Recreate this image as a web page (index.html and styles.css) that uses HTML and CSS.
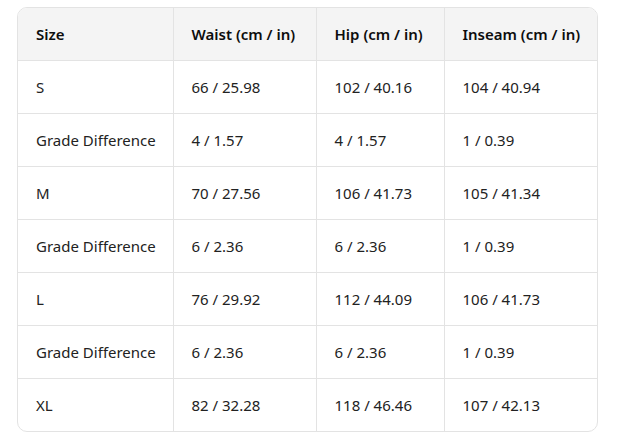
FILE: index.html
```html
<!DOCTYPE html>
<html>
<head>
<meta charset="utf-8">
<link rel="stylesheet" href="styles.css">
</head>
<body>
<div class="wrap">
  <table class="grid">
    <colgroup>
      <col class="c1"><col class="c2"><col class="c3"><col class="c4">
    </colgroup>
    <thead>
      <tr><th>Size</th><th>Waist (cm / in)</th><th>Hip (cm / in)</th><th>Inseam (cm / in)</th></tr>
    </thead>
    <tbody>
      <tr><td>S</td><td>66 / 25.98</td><td>102 / 40.16</td><td>104 / 40.94</td></tr>
      <tr><td>Grade Difference</td><td>4 / 1.57</td><td>4 / 1.57</td><td>1 / 0.39</td></tr>
      <tr><td>M</td><td>70 / 27.56</td><td>106 / 41.73</td><td>105 / 41.34</td></tr>
      <tr><td>Grade Difference</td><td>6 / 2.36</td><td>6 / 2.36</td><td>1 / 0.39</td></tr>
      <tr><td>L</td><td>76 / 29.92</td><td>112 / 44.09</td><td>106 / 41.73</td></tr>
      <tr><td>Grade Difference</td><td>6 / 2.36</td><td>6 / 2.36</td><td>1 / 0.39</td></tr>
      <tr><td>XL</td><td>82 / 32.28</td><td>118 / 46.46</td><td>107 / 42.13</td></tr>
    </tbody>
  </table>
</div>
</body>
</html>
```
FILE: styles.css
```css
html, body {
  margin: 0;
  padding: 0;
  background: #ffffff;
}
body {
  padding: 7px 19px 0 17px;
  font-family: "Noto Sans", "Open Sans", sans-serif;
  font-size: 15px;
  color: #0d0d0d;
}
.wrap {
  width: 579px;
  border: 1px solid #e3e3e3;
  border-radius: 10px;
  overflow: hidden;
}
.grid {
  width: 100%;
  border-collapse: collapse;
  table-layout: fixed;
}
.c1 { width: 155px; }
.c2 { width: 143px; }
.c3 { width: 128px; }
.c4 { width: auto; }
.grid th, .grid td {
  text-align: left;
  padding: 0 0 0 18px;
  border-right: 1px solid #e3e3e3;
  border-bottom: 1px solid #e3e3e3;
  white-space: nowrap;
}
.grid th:last-child, .grid td:last-child {
  border-right: none;
}
.grid tbody tr:last-child td {
  border-bottom: none;
}
.grid th {
  background: #f4f4f4;
  font-weight: 600;
  height: 52px;
}
.grid td {
  height: 52px;
  font-weight: 400;
  color: #222222;
}
```
